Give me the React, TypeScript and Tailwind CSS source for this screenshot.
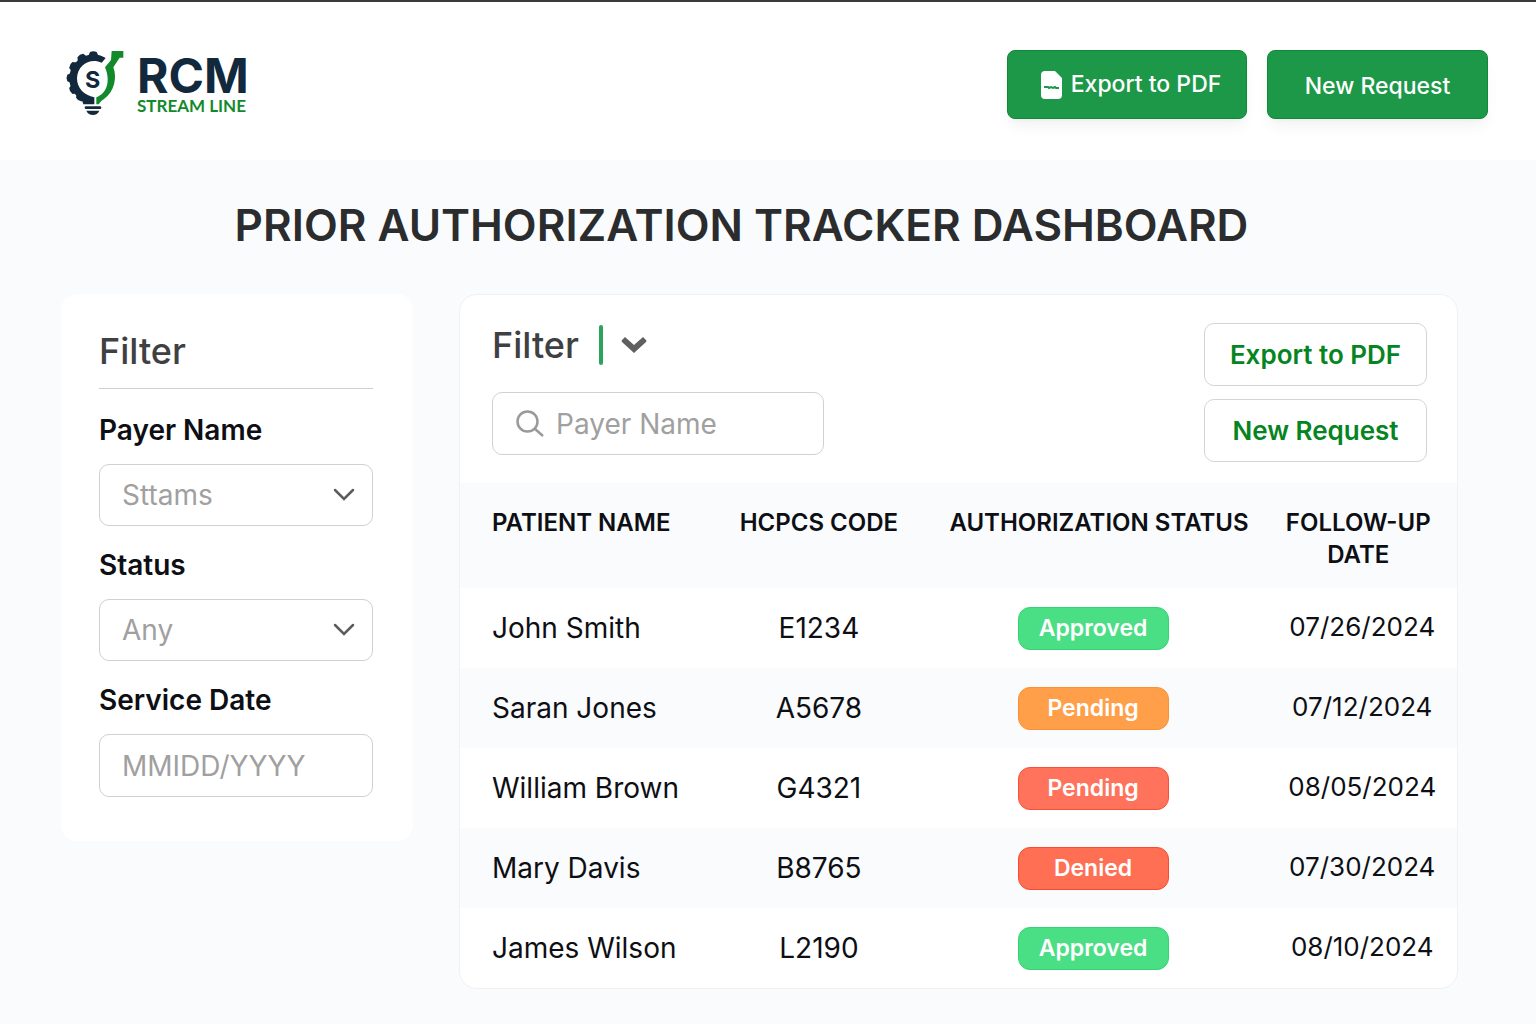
import { useState } from 'react';
import type { ReactNode } from 'react';

type Tone = 'green' | 'orange' | 'coral' | 'red';

interface AuthRequest {
  patient: string;
  code: string;
  status: string;
  tone: Tone;
  followUp: string;
}

const requests: AuthRequest[] = [
  { patient: 'John Smith', code: 'E1234', status: 'Approved', tone: 'green', followUp: '07/26/2024' },
  { patient: 'Saran Jones', code: 'A5678', status: 'Pending', tone: 'orange', followUp: '07/12/2024' },
  { patient: 'William Brown', code: 'G4321', status: 'Pending', tone: 'coral', followUp: '08/05/2024' },
  { patient: 'Mary Davis', code: 'B8765', status: 'Denied', tone: 'red', followUp: '07/30/2024' },
  { patient: 'James Wilson', code: 'L2190', status: 'Approved', tone: 'green', followUp: '08/10/2024' },
];

const toneClasses: Record<Tone, string> = {
  green: 'bg-[#4ade85] border-[#2fd673]',
  orange: 'bg-[#ff9f4a] border-[#fc9130]',
  coral: 'bg-[#ff735c] border-[#fb5038]',
  red: 'bg-[#ff6f54] border-[#fb4a2e]',
};

const Logo = () => (
  <div className="flex items-center gap-3">
    <svg viewBox="45 46 180 198" className="h-[66px] w-[60px]" aria-hidden="true">
      <g fill="#12293d">
        {[0, -30, -60, -90, -120, -146].map((angle) => (
          <path key={angle} d="M113 68 L120 52 Q130 47 140 52 L147 68 Z" transform={`rotate(${angle} 130 130)`} />
        ))}
        <path d="M167 70 C120 40 58 76 58 132 C58 162 76 184 95 194 L100 209 L133 209 L133 188 C102 182 81 160 81 131 C82 92 120 68 155 84 Z" />
        <rect x="104" y="215" width="50" height="8" rx="4" />
        <path d="M109 228 H148 Q142 241 129 241 Q115 241 109 228 Z" />
      </g>
      <path
        d="M185 49 H220 V69 H209 L190 98 C202 128 193 172 162 193 Q150 200 146 209 H139 V188 C172 176 182 138 165 98 L183 76 Z"
        fill="#128a2c"
      />
      <text x="128" y="161" textAnchor="middle" className="fill-[#12293d] font-['Inter',sans-serif] text-[70px] font-bold">
        S
      </text>
    </svg>
    <div className="pt-[6px]">
      <div className="text-[48px] leading-10 font-bold text-[#12293d]">RCM</div>
      <div className="font-['Lato',sans-serif] text-[17px] leading-5 font-bold text-[#128a2c]">STREAM LINE</div>
    </div>
  </div>
);

const PdfIcon = () => (
  <svg viewBox="0 0 22 30" className="h-[30px] w-[22px]" aria-hidden="true">
    <path d="M4 1 H14 L21 8 V25 Q21 29 17 29 H4 Q0 29 0 25 V5 Q0 1 4 1 Z" fill="#fff" />
    <path d="M3 17 h4 l1 1 l2 -1 l2 1 l2 -1 l1 1 h3" fill="none" stroke="#1c9848" strokeWidth="2" />
  </svg>
);

const Chevron = ({ className }: { className: string }) => (
  <svg viewBox="0 0 22 14" className={className} fill="none" stroke="currentColor" aria-hidden="true">
    <path d="M2 2 L11 11 L20 2" strokeLinecap="round" />
  </svg>
);

interface SelectFieldProps {
  id: string;
  label: string;
  options: string[];
}

const SelectField = ({ id, label, options }: SelectFieldProps) => (
  <div>
    <label htmlFor={id} className="block text-[28px] leading-9 font-semibold text-[#0d0f14]">
      {label}
    </label>
    <div className="relative mt-4">
      <select
        id={id}
        className="h-[62px] w-full appearance-none rounded-[10px] border border-[#d0d0d0] bg-white px-[22px] text-[28px] text-[#a0a0a0]"
      >
        {options.map((option) => (
          <option key={option}>{option}</option>
        ))}
      </select>
      <Chevron className="pointer-events-none absolute top-6 right-[18px] w-[22px] stroke-[2.5] text-[#5c5c5c]" />
    </div>
  </div>
);

const OutlineButton = ({ children }: { children: ReactNode }) => (
  <button
    type="button"
    className="h-[63px] w-[223px] rounded-[10px] border border-[#d4d4d4] bg-white text-[26px] font-semibold text-[#06841f]"
  >
    {children}
  </button>
);

const App = () => {
  const [serviceDate, setServiceDate] = useState('');
  const [search, setSearch] = useState('');

  return (
    <div className="min-h-screen bg-[#fafbfd] font-['Inter',sans-serif] text-[#0d0f14]">
      <header className="flex h-40 items-start justify-between border-t-2 border-[#3a3a3a] bg-white pt-12 pr-12 pl-[65px]">
        <Logo />
        <div className="flex gap-5 text-[23px] font-medium text-white">
          <button
            type="button"
            className="flex h-[69px] w-[240px] items-center justify-center gap-2 rounded-lg border border-[#0f8a35] bg-[#1c9848] pl-2 shadow-lg shadow-black/5"
          >
            <PdfIcon />
            Export to PDF
          </button>
          <button
            type="button"
            className="h-[69px] w-[221px] rounded-lg border border-[#0f8a35] bg-[#1c9848] pt-1 shadow-lg shadow-black/5"
          >
            New Request
          </button>
        </div>
      </header>

      <main className="pr-[78px] pb-8 pl-[61px]">
        <h1 className="pt-[35px] pr-9 text-center text-[44px] leading-[60px] font-semibold text-[#2b2c2e]">
          PRIOR AUTHORIZATION TRACKER DASHBOARD
        </h1>

        <div className="mt-[39px] flex items-start gap-[46px]">
          <aside className="w-[352px] shrink-0 rounded-2xl bg-white pt-8 pr-10 pb-11 pl-[38px]">
            <h2 className="border-b border-[#d0d0d0] pb-3 text-4xl leading-[50px] font-medium text-[#3f4042]">Filter</h2>
            <form className="mt-[23px] flex flex-col gap-[21px]">
              <SelectField id="payer" label="Payer Name" options={['Sttams']} />
              <SelectField id="status" label="Status" options={['Any', 'Approved', 'Pending', 'Denied']} />
              <div>
                <label htmlFor="service-date" className="block text-[28px] leading-9 font-semibold">
                  Service Date
                </label>
                <input
                  id="service-date"
                  type="text"
                  value={serviceDate}
                  onChange={(e) => setServiceDate(e.target.value)}
                  placeholder="MMIDD/YYYY"
                  className="mt-4 h-[63px] w-full rounded-[10px] border border-[#d0d0d0] bg-white px-[22px] text-[28px] placeholder:text-[#a0a0a0]"
                />
              </div>
            </form>
          </aside>

          <section className="min-w-0 flex-1 overflow-hidden rounded-[18px] border border-[#f0f1f3] bg-white">
            <div className="flex items-start justify-between pt-7 pr-[30px] pb-[21px] pl-8">
              <div>
                <div className="flex h-11 items-center">
                  <h2 className="text-4xl font-medium text-[#3f4042]">Filter</h2>
                  <span className="ml-5 h-10 w-1 rounded-sm bg-[#2ba35a]" />
                  <button type="button" aria-label="Show filters" className="ml-[18px]">
                    <svg viewBox="0 0 26 18" className="w-[26px]" fill="#606060" aria-hidden="true">
                      <path d="M4 1 L13 9 L22 1 L25 4 Q26 5 25 6 L13 17 L1 6 Q0 5 1 4 Z" />
                    </svg>
                  </button>
                </div>
                <div className="relative mt-[25px]">
                  <svg
                    viewBox="0 0 28 28"
                    className="absolute top-[18px] left-6 w-7"
                    fill="none"
                    stroke="#9a9a9a"
                    strokeWidth="2.5"
                    aria-hidden="true"
                  >
                    <circle cx="11.5" cy="11.5" r="10" />
                    <path d="M18.500 18.500 L27 26" />
                  </svg>
                  <input
                    type="search"
                    aria-label="Payer Name"
                    value={search}
                    onChange={(e) => setSearch(e.target.value)}
                    placeholder="Payer Name"
                    className="h-[63px] w-[332px] rounded-[10px] border border-[#d0d0d0] bg-white pr-4 pl-[63px] text-[28px] placeholder:text-[#a0a0a0]"
                  />
                </div>
              </div>
              <div className="flex flex-col gap-[13px]">
                <OutlineButton>Export to PDF</OutlineButton>
                <OutlineButton>New Request</OutlineButton>
              </div>
            </div>

            <table className="w-full table-fixed">
              <thead>
                <tr className="h-[105px] bg-[#fafbfd] align-top text-2xl leading-8 whitespace-nowrap">
                  <th className="w-[24%] pt-6 pl-8 text-left font-semibold">PATIENT NAME</th>
                  <th className="w-[24%] pt-6 font-semibold">HCPCS CODE</th>
                  <th className="w-[33%] pt-6 pr-2 font-semibold">AUTHORIZATION STATUS</th>
                  <th className="w-[19%] pt-6 pr-2 font-semibold">
                    FOLLOW-UP
                    <br />
                    DATE
                  </th>
                </tr>
              </thead>
              <tbody>
                {requests.map((r) => (
                  <tr key={r.patient} className="h-20 text-[28px] even:bg-[#fafbfd]">
                    <td className="pl-8">{r.patient}</td>
                    <td className="text-center">{r.code}</td>
                    <td className="pr-5">
                      <span
                        className={`mx-auto flex h-[43px] w-[151px] items-center justify-center rounded-xl border text-[23px] font-semibold text-white ${toneClasses[r.tone]}`}
                      >
                        {r.status}
                      </span>
                    </td>
                    <td className="pb-1 text-center text-[26px]">{r.followUp}</td>
                  </tr>
                ))}
              </tbody>
            </table>
          </section>
        </div>
      </main>
    </div>
  );
};

export default App;
